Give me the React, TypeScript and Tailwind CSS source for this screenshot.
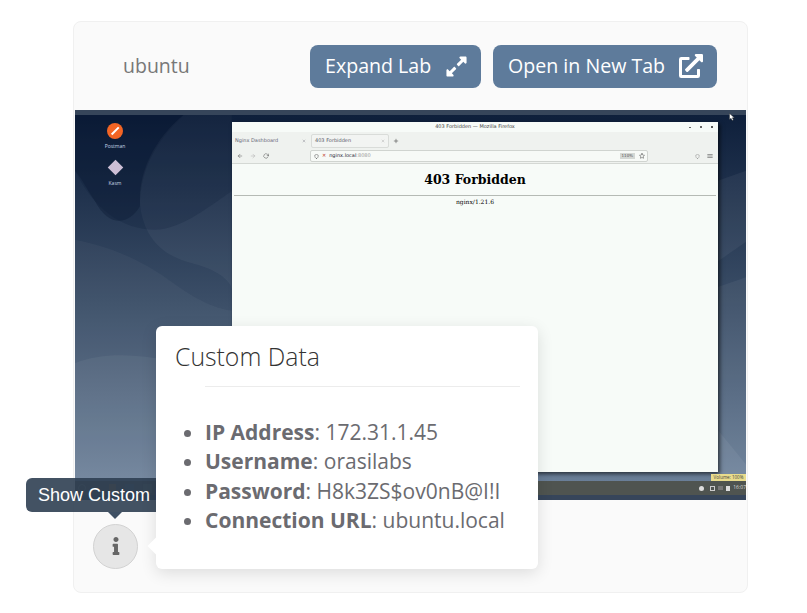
import { FaExpandAlt, FaExternalLinkAlt, FaInfo } from "react-icons/fa";
import { FiArrowLeft, FiArrowRight, FiRotateCw, FiShield, FiStar, FiMenu, FiPlus, FiX } from "react-icons/fi";

const customData = [
  { label: "IP Address", value: "172.31.1.45" },
  { label: "Username", value: "orasilabs" },
  { label: "Password", value: "H8k3ZS$ov0nB@I!I" },
  { label: "Connection URL", value: "ubuntu.local" },
];

function Wallpaper() {
  return (
    <svg className="absolute inset-0 h-full w-full" viewBox="0 0 672 385" preserveAspectRatio="none">
      <path d="M0 0H115C85 25 65 55 65 95C55 112 35 118 20 90C10 75 5 65 0 60Z" fill="#0a1830" fillOpacity="0.35" />
      <path d="M115 0C80 25 60 65 66 100C72 130 90 145 120 152C140 157 157 168 157 178V0Z" fill="#ffffff" fillOpacity="0.045" />
      <path d="M0 60C20 100 50 120 85 118C110 115 135 95 157 80V0H0Z" fill="#081530" fillOpacity="0.18" />
      <path d="M0 128C40 136 70 150 100 172C125 190 145 197 157 198V385H0Z" fill="#ffffff" fillOpacity="0.035" />
      <path d="M0 250C25 240 60 240 95 248C120 254 140 260 157 262V385H0Z" fill="#ffffff" fillOpacity="0.05" />
      <path d="M643 70L672 60V130L643 150Z" fill="#ffffff" fillOpacity="0.05" />
      <path d="M643 175L672 165V385H643Z" fill="#ffffff" fillOpacity="0.05" />
      <path d="M643 315L672 350V365H643Z" fill="#ffffff" fillOpacity="0.06" />
    </svg>
  );
}

function DesktopIcon({ label, diamond }: { label: string; diamond?: boolean }) {
  return (
    <div className="flex w-[40px] flex-col items-center">
      {diamond ? (
        <div className="my-[3px] h-[11px] w-[11px] rotate-45 bg-[#cdbfd6]" />
      ) : (
        <div className="flex h-[16px] w-[16px] items-center justify-center rounded-full bg-[#f36524]">
          <div className="h-[1.5px] w-[10px] -rotate-45 bg-white" />
        </div>
      )}
      <span className="mt-[3px] text-[5px] leading-[8px] text-[#c5d4e6]">{label}</span>
    </div>
  );
}

function BrowserWindow() {
  return (
    <div className="absolute left-[157px] top-[12px] flex h-[350px] w-[486px] flex-col bg-[#f7fbf8] font-['DejaVu_Sans',sans-serif] text-[#333] shadow-[2px_2px_4px_rgba(0,0,0,0.6)]">
      <div className="relative flex h-[10px] shrink-0 items-center justify-center text-[5px] text-[#444]">
        403 Forbidden — Mozilla Firefox
        <span className="absolute right-[5px] top-[4px] flex items-center gap-[9px]">
          <i className="h-[1px] w-[2px] bg-[#666]" />
          <i className="h-[2px] w-[2px] bg-[#666]" />
          <i className="h-[2px] w-[2px] bg-[#555]" />
        </span>
      </div>
      <div className="flex h-[17px] shrink-0 items-center bg-[#eff2ef] pl-[3px] text-[5px]">
        <div className="flex w-[76px] items-center justify-between pr-[5px] text-[#667]">
          <span>Nginx Dashboard</span>
          <FiX className="h-[4px] w-[4px]" />
        </div>
        <div className="flex h-[14px] w-[78px] items-center justify-between rounded-[2px] border border-[#d9dcd9] bg-[#f2f4f2] px-[3px] text-[#556]">
          <span>403 Forbidden</span>
          <FiX className="h-[4px] w-[4px] text-[#999]" />
        </div>
        <FiPlus className="ml-[4px] h-[6px] w-[6px] text-[#333]" />
      </div>
      <div className="flex h-[15px] shrink-0 items-center border-b border-[#d4d8d4] bg-[#eff2ef] pl-[5px] pr-[5px]">
        <FiArrowLeft className="h-[6px] w-[6px] text-[#555]" />
        <FiArrowRight className="ml-[7px] h-[6px] w-[6px] text-[#aaa]" />
        <FiRotateCw className="ml-[7px] h-[6px] w-[6px] text-[#555]" />
        <div className="ml-[41px] flex h-[12px] w-[338px] items-center rounded-[2px] border border-[#d0d4d0] bg-[#f7faf7] pl-[3px] pr-[2px] text-[5px]">
          <FiShield className="h-[5px] w-[5px] text-[#333]" />
          <span className="ml-[3px] text-[5px] text-[#c0392b]">✕</span>
          <span className="ml-[3px] text-[#223]">nginx.local</span>
          <span className="text-[#999]">:8080</span>
          <span className="ml-auto bg-[#d4d8d4] px-[2px] text-[4px] text-[#555]">110%</span>
          <FiStar className="ml-[4px] h-[6px] w-[6px] text-[#444]" />
        </div>
        <FiShield className="ml-auto h-[5px] w-[5px] text-[#777]" />
        <FiMenu className="ml-[7px] h-[6px] w-[6px] text-[#444]" />
      </div>
      <div className="flex flex-col px-[2px] text-black">
        <h1 className="mt-[8px] text-center font-['DejaVu_Serif',serif] text-[12.5px] font-bold leading-[16px]">403 Forbidden</h1>
        <div className="mt-[7px] h-px bg-[#b5bab5]" />
        <p className="mt-[2px] text-center font-['DejaVu_Serif',serif] text-[6px] leading-[8px]">nginx/1.21.6</p>
      </div>
    </div>
  );
}

function LabScreen() {
  return (
    <div className="relative mx-[1px] h-[390px] shrink-0 overflow-hidden bg-gradient-to-b from-[#0d1e3a] via-[#3c4f68] via-50% to-[#6f849d]">
      <Wallpaper />
      <div className="absolute inset-x-0 top-0 h-[5px] bg-[#36455a]" />
      <div className="absolute left-[20px] top-[13px] flex flex-col gap-[9px]">
        <DesktopIcon label="Postman" />
        <DesktopIcon label="Kasm" diamond />
      </div>
      <svg className="absolute right-[11px] top-[3px] h-[8px] w-[6px]" viewBox="0 0 6 8">
        <path d="M0.5 0.5V6.5L2 5.2L3.2 7.6L4.4 7L3.3 4.8H5.4Z" fill="#fff" stroke="#222" strokeWidth="0.4" />
      </svg>
      <BrowserWindow />
      <div className="absolute bottom-[19px] right-0 flex h-[7px] w-[35px] items-center justify-center bg-[#e9dc8c] text-[4.5px] text-[#444]">
        Volume: 100%
      </div>
      <div className="absolute inset-x-0 bottom-[5px] flex h-[14px] items-center gap-[3px] bg-[#4f5450] pl-[3px] text-[5px] text-[#ddd]">
        <i className="h-[8px] w-[8px] rounded-full border border-[#777]" />
        <i className="ml-[20px] h-[9px] w-[7px] bg-[#8a6a3a]" />
        <i className="ml-[6px] h-[9px] w-[9px] bg-[#4a5f74]" />
        <i className="ml-[6px] h-[9px] w-[9px] bg-[#6b6f6a]" />
        <i className="ml-auto h-[5px] w-[5px] rounded-full bg-[#ddd]" />
        <i className="ml-[3px] h-[5px] w-[5px] border border-[#ccc]" />
        <i className="h-[4px] w-[5px] bg-[#777]" />
        <i className="h-[5px] w-[4px] bg-[#ddd]" />
        <span className="whitespace-nowrap">16:07</span>
      </div>
      <div className="absolute inset-x-0 bottom-0 h-[5px] bg-[#36455a]" />
    </div>
  );
}

export default function App() {
  return (
    <div className="relative h-[613px] w-[807px] overflow-hidden bg-white pl-[73px] pt-[21px] font-['Open_Sans',sans-serif]">
      <div className="flex h-[572px] w-[675px] flex-col rounded-[8px] border border-[#f0f0f0] bg-[#fafafa]">
        <div className="flex h-[88px] shrink-0 items-center pl-[49px] pr-[30px]">
          <span className="text-[19.5px] text-[#777]">ubuntu</span>
          <button className="ml-auto flex h-[43px] w-[171px] items-center justify-between rounded-[8px] bg-[#5e7b9b] pl-[15px] pr-[13px] text-[19.6px] text-white">
            Expand Lab
            <FaExpandAlt className="h-[23px] w-[23px]" />
          </button>
          <button className="ml-[12px] flex h-[43px] w-[224px] items-center justify-between rounded-[8px] bg-[#5e7b9b] pl-[15px] pr-[14px] text-[19.6px] text-white">
            Open in New Tab
            <FaExternalLinkAlt className="h-[24px] w-[24px]" />
          </button>
        </div>
        <LabScreen />
        <div className="flex flex-1 items-center pl-[19px]">
          <button className="flex h-[45px] w-[45px] items-center justify-center rounded-full border border-[#d2d2d2] bg-[#e6e6e6] text-[#666]">
            <FaInfo className="h-[18px] w-[18px]" />
          </button>
        </div>
      </div>

      {/* tooltip sits under the popover */}
      <div className="absolute left-[26px] top-[478px] flex h-[34px] w-[160px] items-center rounded-[6px] bg-[#2f3f52]/90 pl-[12px] font-['Liberation_Sans',sans-serif] text-[18px] whitespace-nowrap text-white">
        Show Custom Data
        <div className="absolute left-[82px] top-[34px] h-0 w-0 border-x-[7px] border-t-[7px] border-x-transparent border-t-[#3e4f63]" />
      </div>

      <div className="absolute left-[156px] top-[326px] h-[243px] w-[382px] rounded-[6px] bg-white pl-[19px] shadow-[0_4px_16px_rgba(0,0,0,0.12)]">
        <div className="absolute -left-[6px] top-[214px] h-3 w-3 rotate-45 bg-white" />
        <h3 className="relative mt-[13px] text-[24.8px] leading-[34px] font-light text-[#333]">Custom Data</h3>
        <div className="ml-[30px] mr-[18px] mt-[13px] h-px bg-[#ececec]" />
        <ul className="mt-[31px] list-disc pl-[30px] text-[21px] leading-[29.3px] text-[#6b6b70]">
          {customData.map((item) => (
            <li key={item.label}>
              <strong className="font-bold">{item.label}</strong>: {item.value}
            </li>
          ))}
        </ul>
      </div>
    </div>
  );
}
